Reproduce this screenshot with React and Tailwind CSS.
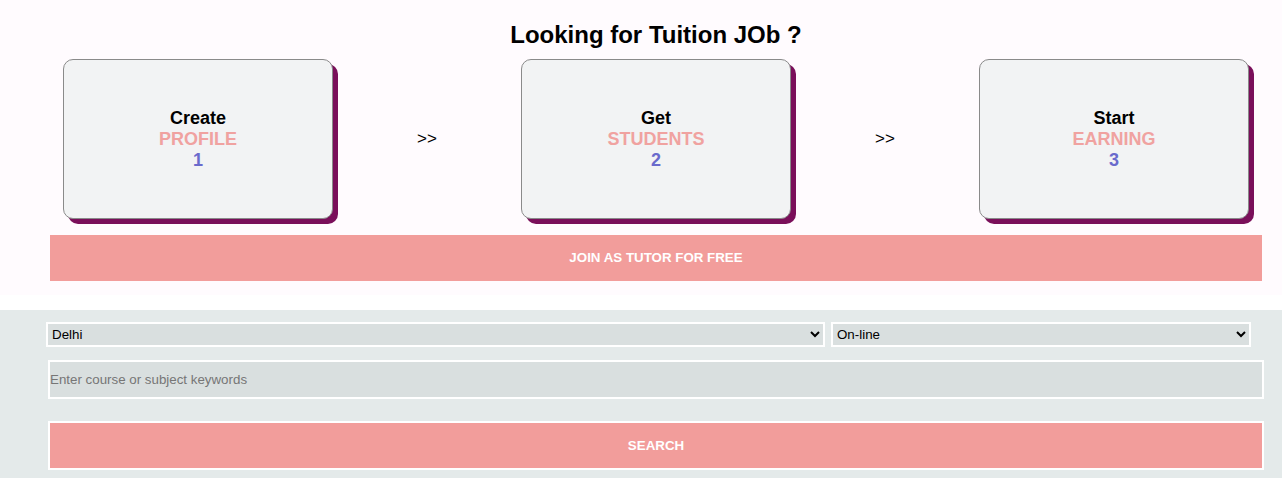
import React from 'react';

const steps = [
    { top: 'Create', mid: 'PROFILE', num: '1' },
    { top: 'Get', mid: 'STUDENTS', num: '2' },
    { top: 'Start', mid: 'EARNING', num: '3' },
];

const StepCard = ({ step }) => (
    <div className="w-[270px] h-[160px] shrink-0 rounded-[10px] border border-[#8a8a8a] bg-[#f2f3f4] shadow-[5px_5px_0_#7a0f5a] flex flex-col items-center justify-center text-[18px] font-bold leading-[21px]">
        <span className="text-black">{step.top}</span>
        <span className="text-[#f0a2a0]">{step.mid}</span>
        <span className="text-[#6a6acc]">{step.num}</span>
    </div>
);

const App = () => {
    return (
        <div className="w-[1282px] min-h-[478px] bg-white font-['Liberation_Sans',Arial,sans-serif]">
            <div className="bg-[#fffbfe] pt-[20px] pb-[14px]">
                <h1 className="ml-[50px] w-[1212px] text-center text-[24px] font-bold leading-[30px] text-black">
                    Looking for Tuition JOb ?
                </h1>
                <div className="ml-[50px] w-[1212px] mt-[9px] px-[13px] flex items-center justify-between">
                    {steps.map((s, i) => (
                        <React.Fragment key={s.num}>
                            <StepCard step={s} />
                            {i < steps.length - 1 && (
                                <span className="w-[20px] text-center text-[17px] text-black">&gt;&gt;</span>
                            )}
                        </React.Fragment>
                    ))}
                </div>
                <button className="ml-[50px] mt-[16px] w-[1212px] h-[46px] bg-[#f29d9b] text-white text-[13.33px] font-bold uppercase">
                    Join as tutor for free
                </button>
            </div>
            <div className="h-[15px] bg-white" />
            <div className="bg-[#e4eaea] pt-[12px] pb-[8px] min-h-[168px]">
                <div className="flex gap-[6px] pl-[46px]">
                    <select defaultValue="Delhi" className="w-[779px] h-[25px] border-2 border-white bg-[#d9dfdf] text-[13.33px] text-black pl-0 outline-none">
                        <option>Delhi</option>
                        <option>Mumbai</option>
                    </select>
                    <select defaultValue="On-line" className="w-[420px] h-[25px] border-2 border-white bg-[#d9dfdf] text-[13.33px] text-black pl-0 outline-none">
                        <option>On-line</option>
                        <option>Home</option>
                    </select>
                </div>
                <input
                    type="text"
                    placeholder="Enter course or subject keywords"
                    className="block ml-[48px] mt-[13px] w-[1216px] h-[39px] border-2 border-white bg-[#d9dfdf] text-[13.33px] px-0 placeholder:text-[#767676] outline-none"
                />
                <button className="block ml-[48px] mt-[22px] w-[1216px] h-[49px] border-2 border-white bg-[#f29d9b] text-white text-[13.33px] font-bold">
                    SEARCH
                </button>
            </div>
        </div>
    );
};

export default App;
